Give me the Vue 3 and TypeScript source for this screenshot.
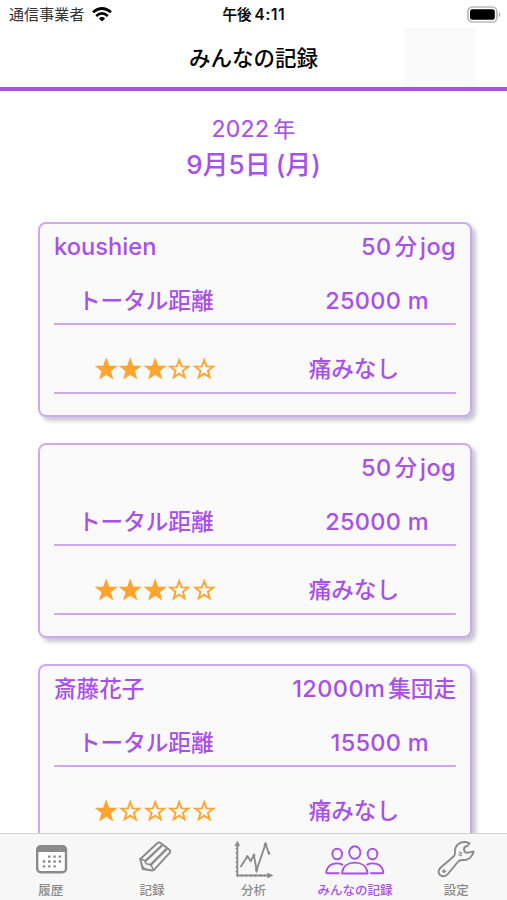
<script setup lang="ts">
interface Entry {
  name: string
  menu: string[]
  distance: string
  stars: number
  pain: string
}

const entries: Entry[] = [
  { name: 'koushien', menu: ['50', '分', 'jog'], distance: '25000 m', stars: 3, pain: '痛みなし' },
  { name: '', menu: ['50', '分', 'jog'], distance: '25000 m', stars: 3, pain: '痛みなし' },
  { name: '斎藤花子', menu: ['12000m', '集団走'], distance: '15500 m', stars: 1, pain: '痛みなし' },
]

const isCjk = (s: string): boolean => /[^\x00-\x7f]/.test(s)
</script>

<template>
  <div class="screen">
    <header class="header">
      <div class="status">
        <div class="carrier">
          <span>通信事業者</span>
          <svg class="wifi" width="20" height="15" viewBox="0 0 20 15">
            <g fill="none" stroke="#000" stroke-width="2.7">
              <path d="M1 5.3Q10 -2.3 19 5.3" />
              <path d="M4.2 8.9Q10 3.9 15.8 8.9" />
            </g>
            <path d="M6.9 11.4Q10 8.8 13.1 11.4L10 14.5Z" />
          </svg>
        </div>
        <div class="clock"><span>午後</span><span class="digits">4:11</span></div>
        <div class="power">
          <svg width="34" height="17" viewBox="0 0 34 17">
            <rect x=".9" y="1" width="29" height="15" rx="4.6" fill="#fff" stroke="#b9b9b9" stroke-width="1.7" />
            <rect x="3" y="3.2" width="24.8" height="10.6" rx="2.3" />
            <path d="M31.8 6v5q1.6-.7 1.6-2.5T31.8 6Z" fill="#b0b0b0" />
          </svg>
        </div>
      </div>
      <div class="nav">
        <h1>みんなの記録</h1>
        <div class="nav-action"></div>
      </div>
    </header>

    <main class="content">
      <div class="date">
        <div class="year"><span>2022</span><span class="unit">年</span></div>
        <div class="day"><span>9</span><span>月</span><span>5</span><span>日</span><span class="paren">(</span><span>月</span><span>)</span></div>
      </div>

      <section v-for="(entry, i) in entries" :key="i" class="card">
        <div class="card-head">
          <span class="name" :class="{ latin: !isCjk(entry.name) }">{{ entry.name }}</span>
          <span class="menu">
            <span v-for="part in entry.menu" :key="part" :class="{ latin: !isCjk(part) }">{{ part }}</span>
          </span>
        </div>
        <div class="row distance">
          <span class="label">トータル距離</span>
          <span class="value">{{ entry.distance }}</span>
        </div>
        <div class="row rating">
          <span class="stars">
            <svg v-for="n in 5" :key="n" width="24.4" height="24" viewBox="0 0 24.4 24">
              <path
                :class="n <= entry.stars ? 'filled' : 'empty'"
                d="M12.2 3L14.5 9.4L21.2 9.6L15.9 13.8L17.7 20.3L12.2 16.6L6.7 20.3L8.5 13.8L3.2 9.6L9.9 9.4Z"
              />
            </svg>
          </span>
          <span class="pain">{{ entry.pain }}</span>
        </div>
      </section>
    </main>

    <nav class="tabs">
      <div class="tab">
        <svg width="60" height="44" viewBox="0 0 60 44">
          <rect x="16.2" y="12.3" width="28.8" height="26" rx="3.6" fill="#fff" stroke="#8b8b8b" stroke-width="2.4" />
          <path d="M15.4 18v-2.5q0-4 4-4h22.4q4 0 4 4V18Z" fill="#8b8b8b" />
          <g stroke="#8b8b8b" stroke-width="2.4" stroke-dasharray="2.4 2.9">
            <path d="M27 22.6h14M21.8 27.5h19M21.8 32.4h13" />
          </g>
        </svg>
        <span>履歴</span>
      </div>
      <div class="tab">
        <svg width="60" height="44" viewBox="0 0 60 44">
          <g fill="none" stroke="#8b8b8b" stroke-linejoin="round" stroke-linecap="round">
            <path stroke-width="2" d="M18.3 25L35.5 9.1Q37 7.8 38.6 9L47.3 15.7Q49 17.1 47.6 18.8L32.7 35.1Q31.7 36.3 30.2 36.5L20.8 35.1Z" />
            <path stroke-width="1.5" d="M18.3 25L22.6 26.2L24 29.8L28.9 30.7L31.5 36" />
            <path stroke-width="2.3" d="M23.6 26.8L39.8 11.7M28.6 30.9L44.7 14.9" />
          </g>
          <path d="M19 30.5L25.5 36L20.8 35.7Z" fill="#8b8b8b" />
        </svg>
        <span>記録</span>
      </div>
      <div class="tab">
        <svg width="60" height="44" viewBox="0 0 60 44">
          <g fill="none" stroke="#8b8b8b" stroke-width="1.9">
            <path d="M14.3 10v31.5h32.5" />
            <path d="M12.4 12l1.9-3.3 1.9 3.3M44.4 39.6l3.8 1.9-3.8 1.9" />
            <path d="M17.5 33l6.8-10.5 3.4 4.2 3.2-5.4 2.7 14.8L42.5 10l3.5 9.5" />
          </g>
          <path d="M13.6 14v27.5h30" fill="none" stroke="#8b8b8b" stroke-width="2.4" stroke-dasharray="1 3.6" />
          <g fill="#8b8b8b">
            <circle cx="24.3" cy="22.7" r="1.5" /><circle cx="27.7" cy="26.6" r="1.4" />
            <circle cx="30.9" cy="21.5" r="1.5" /><circle cx="33.6" cy="36" r="1.6" />
            <circle cx="42.5" cy="10.3" r="1.6" /><circle cx="46" cy="19.3" r="1.4" />
          </g>
        </svg>
        <span>分析</span>
      </div>
      <div class="tab active">
        <svg width="60" height="44" viewBox="0 0 60 44">
          <g fill="none" stroke="#a850e8" stroke-width="1.9" stroke-linejoin="round" stroke-linecap="round">
            <ellipse cx="29.8" cy="18.5" rx="5.6" ry="6.3" />
            <ellipse cx="12.2" cy="20" rx="4.8" ry="5.3" />
            <ellipse cx="47.5" cy="20" rx="4.8" ry="5.3" />
            <path d="M17.4 39.5Q17 39.5 17.2 37.8C18.3 31.8 23.5 28.6 29.8 28.6S41.3 31.8 42.4 37.8Q42.6 39.5 42.2 39.5Z" />
            <path d="M13.8 39.3H2.3Q1 39.3 1.3 37.9C2.4 32.3 6.7 29.4 12 29.4Q15 29.4 17.3 30.7" />
            <path d="M45.9 39.3H57.3Q58.6 39.3 58.3 37.9C57.2 32.3 52.9 29.4 47.6 29.4Q44.6 29.4 42.3 30.7" />
          </g>
        </svg>
        <span>みんなの記録</span>
      </div>
      <div class="tab">
        <svg width="60" height="44" viewBox="0 0 60 44">
          <path
            d="M43.5 9.3Q37 6.4 32 10.3Q28.5 13.5 29 18.5Q29.2 21 27 23.1L14.7 33.5Q10.8 37.5 14 41Q17.8 44 21.7 40.1L31.8 28Q33.6 25.9 36.4 26Q43.5 26.2 46.2 20.8Q48 18.5 47.5 17.4L41.4 18.9Q38.4 18.5 38 15.6Q37.7 12.5 41.5 12Z"
            fill="none" stroke="#8b8b8b" stroke-width="1.9" stroke-linejoin="round"
          />
          <circle cx="18" cy="37.3" r="1.8" fill="#8b8b8b" />
          <path d="M32.7 18l3 1.1-2.6 1.7 3 1" fill="none" stroke="#8b8b8b" stroke-width="1.1" />
        </svg>
        <span>設定</span>
      </div>
    </nav>
  </div>
</template>

<style>
body {
  background: #fff;
  overflow: hidden;
}
</style>

<style scoped>
.screen {
  width: 507px;
  height: 900px;
  display: flex;
  flex-direction: column;
  overflow: hidden;
  background: #fff;
  color: #a850e8;
  font-family: Inter, "Noto Sans CJK JP", sans-serif;
}
.header {
  flex: none;
  height: 91px;
  box-sizing: border-box;
  border-bottom: 4px solid #a850e8;
  color: #000;
}
.status {
  height: 28px;
  display: grid;
  grid-template-columns: 1fr auto 1fr;
  align-items: center;
  padding: 1px 6px 0 9px;
  box-sizing: border-box;
  line-height: 27px;
}
.carrier {
  display: flex;
  align-items: center;
  font-size: 15px;
  letter-spacing: 0.1px;
  color: #333;
}
.wifi {
  margin-left: 7px;
}
.clock {
  display: flex;
  margin-right: 2px;
  font-size: 14.5px;
  font-weight: 500;
  -webkit-text-stroke: 0.2px #000;
}
.digits {
  margin-left: 3px;
  font-size: 15.5px;
  letter-spacing: 0.8px;
}
.power {
  display: flex;
  justify-content: flex-end;
}
.nav {
  height: 59px;
  display: grid;
  grid-template-columns: 1fr auto 1fr;
}
h1 {
  grid-column: 2;
  margin: 0;
  padding-top: 1px;
  font-size: 21.5px;
  line-height: 58px;
  font-weight: 500;
}
.nav-action {
  width: 72px;
  height: 56px;
  justify-self: end;
  margin-right: 31px;
  background: #fafafa;
}
.content {
  flex: 1;
  min-height: 0;
  overflow: hidden;
  display: flex;
  flex-direction: column;
  align-items: center;
  font-weight: 500;
}
.date {
  flex: none;
  height: 131px;
  box-sizing: border-box;
  padding-top: 20px;
  text-align: center;
}
.year,
.day {
  display: flex;
  justify-content: center;
  height: 36px;
  line-height: 36px;
}
.year {
  font-size: 23px;
  font-weight: 400;
  letter-spacing: 0.3px;
  -webkit-text-stroke: 0.2px #a850e8;
}
.unit {
  margin-left: 4px;
  font-size: 22px;
}
.day {
  font-size: 26px;
}
.paren {
  margin-left: 5px;
}
.card {
  flex: none;
  width: 434px;
  height: 195px;
  box-sizing: border-box;
  margin: 0 0 26px 3px;
  padding: 0 14px;
  border: 2px solid #cfa8f3;
  border-radius: 8px;
  background: #fafafa;
  box-shadow: 4px 4px 4px rgba(80, 70, 90, 0.3);
  font-size: 22.6px;
  line-height: 46px;
}
.card-head {
  height: 46px;
  display: flex;
  justify-content: space-between;
}
.name.latin {
  font-size: 23.7px;
}
.menu {
  display: flex;
  gap: 3px;
}
.menu .latin {
  font-size: 23.5px;
  letter-spacing: 0.4px;
}
.row {
  display: flex;
  justify-content: space-between;
  box-sizing: border-box;
  border-bottom: 2px solid #cfa8f3;
}
.distance {
  height: 55px;
  padding: 8px 27px 0 24px;
  line-height: 45px;
}
.value {
  font-size: 23.5px;
  letter-spacing: 0.3px;
}
.rating {
  height: 69px;
  padding: 21px 57px 0 40px;
  line-height: 45px;
}
.stars {
  display: flex;
  align-items: center;
  height: 45px;
}
.filled,
.empty {
  stroke: #ffa52e;
  stroke-width: 1.9;
  stroke-linejoin: miter;
}
.filled {
  fill: #ffa52e;
}
.empty {
  fill: none;
}
.tabs {
  flex: none;
  height: 67px;
  box-sizing: border-box;
  display: grid;
  grid-template-columns: repeat(5, 1fr);
  border-top: 1px solid #cfcfd2;
  background: #f7f7f7;
}
.tab {
  display: flex;
  flex-direction: column;
  align-items: center;
  color: #8b8b8b;
  font-size: 12.5px;
  font-weight: 500;
  line-height: 18px;
}
.tab svg {
  flex: none;
  margin-bottom: 4px;
}
.active {
  color: #a850e8;
}
</style>
